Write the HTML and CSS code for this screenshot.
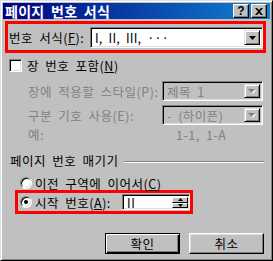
FILE: index.html
```html
<!DOCTYPE html>
<html>
<head>
  <title>페이지 번호 서식</title>
  <link rel="stylesheet" href="styles.css">
</head>
<body>
  <div class="window">
    <div class="titlebar">
      <span class="title">페이지 번호 서식</span>
      <div class="title-btns">
        <span class="tbtn">?</span>
        <span class="tbtn close">
          <svg width="8" height="7" viewBox="0 0 8 7"><path d="M0 0h2l2 2 2-2h2L5 3.5 8 7H6L4 5 2 7H0l3-3.5z" fill="#000"/></svg>
        </span>
      </div>
    </div>

    <div class="mark mark-format">
      <span class="label">번호 서식(<u>F</u>):</span>
      <div class="combo combo-wide">
        <span class="combo-text">I, II, III, ···</span>
        <span class="drop"><svg width="7" height="4" viewBox="0 0 7 4"><path d="M0 0h7L3.5 4z" fill="#000"/></svg></span>
      </div>
    </div>

    <div class="check-row">
      <span class="checkbox"></span>
      <span>장 번호 포함(<u>N</u>)</span>
    </div>

    <div class="field-row disabled">
      <span class="label">장에 적용할 스타일(P):</span>
      <div class="combo combo-small">
        <span class="combo-text">제목 1</span>
        <span class="drop"><svg width="8" height="5" viewBox="0 0 8 5"><path d="M1 1h7L4.5 5z" fill="#fff"/><path d="M0 0h7L3.5 4z" fill="#808080"/></svg></span>
      </div>
    </div>

    <div class="field-row disabled">
      <span class="label">구분 기호 사용(E):</span>
      <div class="combo combo-small">
        <span class="combo-text">- (하이픈)</span>
        <span class="drop"><svg width="8" height="5" viewBox="0 0 8 5"><path d="M1 1h7L4.5 5z" fill="#fff"/><path d="M0 0h7L3.5 4z" fill="#808080"/></svg></span>
      </div>
    </div>

    <div class="example-row disabled">
      <span class="label">예:</span>
      <span class="example">1-1, 1-A</span>
    </div>

    <div class="group-title">
      <span>페이지 번호 매기기</span>
      <span class="etch"></span>
    </div>

    <div class="radio-row">
      <span class="radio"></span>
      <span>이전 구역에 이어서(<u>C</u>)</span>
    </div>

    <div class="mark mark-start">
      <span class="radio checked"></span>
      <span class="label">시작 번호(<u>A</u>):</span>
      <div class="spin-field">
        <span class="spin-text">II</span>
        <div class="spin">
          <span class="spin-btn"><svg width="5" height="3" viewBox="0 0 5 3"><path d="M2.5 0L5 3H0z" fill="#000"/></svg></span>
          <span class="spin-btn"><svg width="5" height="3" viewBox="0 0 5 3"><path d="M0 0h5L2.5 3z" fill="#000"/></svg></span>
        </div>
      </div>
    </div>

    <div class="buttons">
      <span class="btn default">확인</span>
      <span class="btn">취소</span>
    </div>
  </div>
</body>
</html>
```

FILE: styles.css
```css
* {
  box-sizing: border-box;
}

body {
  margin: 0;
  font-family: "Noto Sans CJK KR", "Noto Sans", sans-serif;
  font-size: 12.5px;
  letter-spacing: 0.5px;
  word-spacing: 3px;
  color: #000;
}

.window {
  width: 273px;
  height: 261px;
  background-color: #c0c0c0;
  border: 1px solid;
  border-color: #dfdfdf #000 #000 #dfdfdf;
  box-shadow: inset 1px 1px #fff, inset -1px -1px #808080;
  padding: 2px;
}

.titlebar {
  height: 16px;
  display: flex;
  align-items: center;
  justify-content: space-between;
  background: linear-gradient(to right, #000080, #1084d0);
  color: #fff;
}

.title {
  font-weight: bold;
  font-size: 14px;
  letter-spacing: 0.3px;
  word-spacing: 3px;
  line-height: 16px;
  padding-left: 2px;
}

.title-btns {
  display: flex;
  gap: 2px;
  margin-right: 3px;
}

.tbtn {
  width: 16px;
  height: 14px;
  display: flex;
  align-items: center;
  justify-content: center;
  background-color: #c0c0c0;
  color: #000;
  font-family: "Liberation Sans", sans-serif;
  font-weight: bold;
  font-size: 12px;
  letter-spacing: 0;
  border: 1px solid;
  border-color: #fff #000 #000 #fff;
  box-shadow: inset -1px -1px #808080;
}

.mark {
  border: 3px solid #ff0000;
  display: flex;
  align-items: center;
}

.mark-format {
  margin: 2px 0 0 2px;
  width: 261px;
  height: 32px;
  padding: 1px 0 0 1px;
}

.combo {
  display: flex;
  align-items: center;
  background-color: #fff;
  border: 1px solid;
  border-color: #808080 #fff #fff #808080;
  box-shadow: inset 1px 1px #000, inset -1px -1px #dfdfdf;
  padding: 2px;
}

.combo-wide {
  margin-left: auto;
  width: 173px;
  height: 21px;
  letter-spacing: 0.2px;
}

.combo-text {
  flex: 1;
  padding-left: 2px;
  white-space: nowrap;
  line-height: 15px;
}

.drop {
  width: 16px;
  height: 100%;
  display: flex;
  align-items: center;
  justify-content: center;
  background-color: #c0c0c0;
  border: 1px solid;
  border-color: #dfdfdf #000 #000 #dfdfdf;
  box-shadow: inset 1px 1px #fff, inset -1px -1px #808080;
}

.check-row {
  display: flex;
  align-items: center;
  gap: 5px;
  height: 13px;
  margin: 6px 0 0 6px;
}

.checkbox {
  width: 13px;
  height: 13px;
  background-color: #fff;
  border: 1px solid;
  border-color: #808080 #fff #fff #808080;
  box-shadow: inset 1px 1px #000, inset -1px -1px #dfdfdf;
}

.disabled {
  color: #808080;
}

.field-row {
  display: flex;
  align-items: center;
  padding-left: 25px;
  margin-top: 9px;
}

.field-row + .field-row {
  margin-top: 4px;
}

.combo-small {
  margin-left: auto;
  margin-right: 7px;
  width: 101px;
  height: 20px;
  background-color: #c0c0c0;
}

.example-row {
  display: flex;
  align-items: center;
  height: 14px;
  margin-top: 2px;
  padding-left: 25px;
}

.example {
  margin-left: 132px;
}

.group-title {
  display: flex;
  align-items: center;
  height: 14px;
  margin-top: 12px;
  padding: 0 6px 0 7px;
}

.etch {
  flex: 1;
  height: 2px;
  margin: 3px 0 0 5px;
  border-top: 1px solid #808080;
  border-bottom: 1px solid #fff;
}

.radio-row {
  display: flex;
  align-items: center;
  gap: 3px;
  height: 12px;
  margin: 10px 0 0 17px;
}

.radio {
  width: 12px;
  height: 12px;
  border-radius: 50%;
  background-color: #fff;
  border: 1px solid;
  border-color: #808080 #fff #fff #808080;
  box-shadow: inset 1px 1px #000, inset -1px -1px #dfdfdf;
  display: flex;
  align-items: center;
  justify-content: center;
}

.radio.checked::after {
  content: "";
  width: 4px;
  height: 4px;
  border-radius: 50%;
  background-color: #000;
}

.mark-start {
  margin: 1px 0 0 12px;
  width: 178px;
  height: 24px;
  padding-left: 2px;
}

.mark-start .label {
  margin-left: 3px;
}

.spin-field {
  margin-left: auto;
  width: 68px;
  height: 16px;
  display: flex;
  background-color: #fff;
  border: 1px solid;
  border-color: #808080 #fff #fff #808080;
  box-shadow: inset 1px 1px #000, inset -1px -1px #dfdfdf;
  padding: 2px 1px 1px 2px;
}

.spin-text {
  flex: 1;
  padding-left: 2px;
  line-height: 12px;
}

.spin {
  display: flex;
  flex-direction: column;
  width: 16px;
}

.spin-btn {
  flex: 1;
  display: flex;
  align-items: center;
  justify-content: center;
  background-color: #c0c0c0;
  border: 1px solid;
  border-color: #fff #000 #000 #fff;
}

.buttons {
  display: flex;
  justify-content: flex-end;
  gap: 9px;
  margin-top: 19px;
  padding-right: 6px;
}

.btn {
  width: 75px;
  height: 21px;
  display: flex;
  align-items: center;
  justify-content: center;
  background-color: #c0c0c0;
  border: 1px solid;
  border-color: #fff #000 #000 #fff;
  box-shadow: inset -1px -1px #808080, inset 1px 1px #dfdfdf;
}

.btn.default {
  border-color: #000;
  box-shadow: inset 1px 1px #fff, inset -1px -1px #000, inset -2px -2px #808080;
}
```
